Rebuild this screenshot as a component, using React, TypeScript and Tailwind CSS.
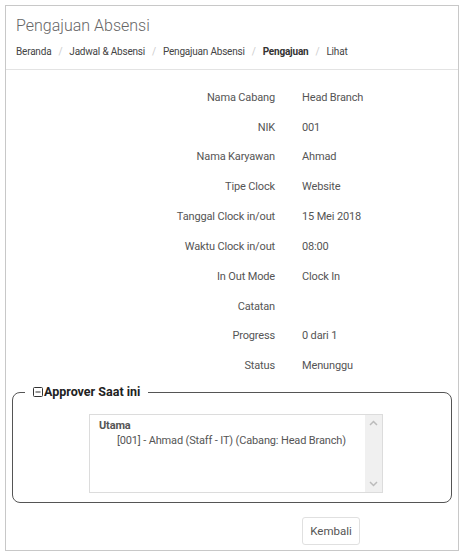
const rows: [string, string][] = [
  ["Nama Cabang", "Head Branch"],
  ["NIK", "001"],
  ["Nama Karyawan", "Ahmad"],
  ["Tipe Clock", "Website"],
  ["Tanggal Clock in/out", "15 Mei 2018"],
  ["Waktu Clock in/out", "08:00"],
  ["In Out Mode", "Clock In"],
  ["Catatan", ""],
  ["Progress", "0 dari 1"],
  ["Status", "Menunggu"],
];

const crumbs = ["Beranda", "Jadwal & Absensi", "Pengajuan Absensi"];

export default function App() {
  return (
    <div className="min-h-[557px] bg-white pt-[5px] pl-[5px] font-['Roboto',sans-serif] text-[#555]">
      <div className="w-[454px] h-[546px] border border-[#c8c8c8] flex flex-col">
        {/* header */}
        <div className="border-b border-[#e3e3e3] px-[10px] pt-[10px] h-[64px]">
          <h1 className="text-[16px] font-light text-[#666] leading-[20px]">Pengajuan Absensi</h1>
          <div className="mt-[10px] flex items-center text-[10px] tracking-[-0.2px] leading-[12px] text-[#444]">
            {crumbs.map((c) => (
              <span key={c} className="flex items-center">
                {c}
                <span className="mx-[7px] text-[#ccc]">/</span>
              </span>
            ))}
            <span className="font-bold text-[#333]">Pengajuan</span>
            <span className="mx-[7px] text-[#ccc]">/</span>
            <span>Lihat</span>
          </div>
        </div>

        {/* detail rows */}
        <div className="pt-[13px] flex flex-col">
          {rows.map(([label, value]) => (
            <div key={label} className="flex items-center h-[29.85px] text-[11px] tracking-[-0.15px]">
              <div className="w-[269px] text-right">{label}</div>
              <div className="ml-[27px]">{value}</div>
            </div>
          ))}
        </div>

        {/* approver */}
        <fieldset className="mx-[6px] mt-[3px] border border-[#555] rounded-[8px] px-[12px] pb-[9px]">
          <legend className="px-[8px] flex items-center text-[12.5px] font-bold text-[#222] leading-[16px]">
            <svg width="10" height="10" viewBox="0 0 10 10" className="mr-[1px]">
              <rect x="0.5" y="0.5" width="9" height="9" rx="1" fill="none" stroke="#333" />
              <line x1="2.5" y1="5" x2="7.5" y2="5" stroke="#333" />
            </svg>
            Approver Saat ini
          </legend>
          <div className="ml-[64px] mt-[14px] w-[294px] h-[79px] border border-[#dcdcdc] flex text-[11px] tracking-[-0.15px]">
            <div className="flex-1 pl-[9px] pt-[3px] leading-[15px]">
              <div className="font-bold">Utama</div>
              <div className="pl-[18px]">[001] - Ahmad (Staff - IT) (Cabang: Head Branch)</div>
            </div>
            <div className="w-[17px] bg-[#f0f0f0] flex flex-col justify-between items-center py-[5px]">
              <svg width="9" height="6" viewBox="0 0 9 6">
                <path d="M1 5 L4.5 1.5 L8 5" fill="none" stroke="#bbb" strokeWidth="1.5" />
              </svg>
              <svg width="9" height="6" viewBox="0 0 9 6">
                <path d="M1 1 L4.5 4.5 L8 1" fill="none" stroke="#bbb" strokeWidth="1.5" />
              </svg>
            </div>
          </div>
        </fieldset>

        {/* footer */}
        <div className="mt-[14px] pl-[296px]">
          <button className="w-[58px] h-[28px] border border-[#e0e0e0] rounded-[3px] text-[11.5px] text-[#555] bg-white">
            Kembali
          </button>
        </div>
      </div>
    </div>
  );
}
